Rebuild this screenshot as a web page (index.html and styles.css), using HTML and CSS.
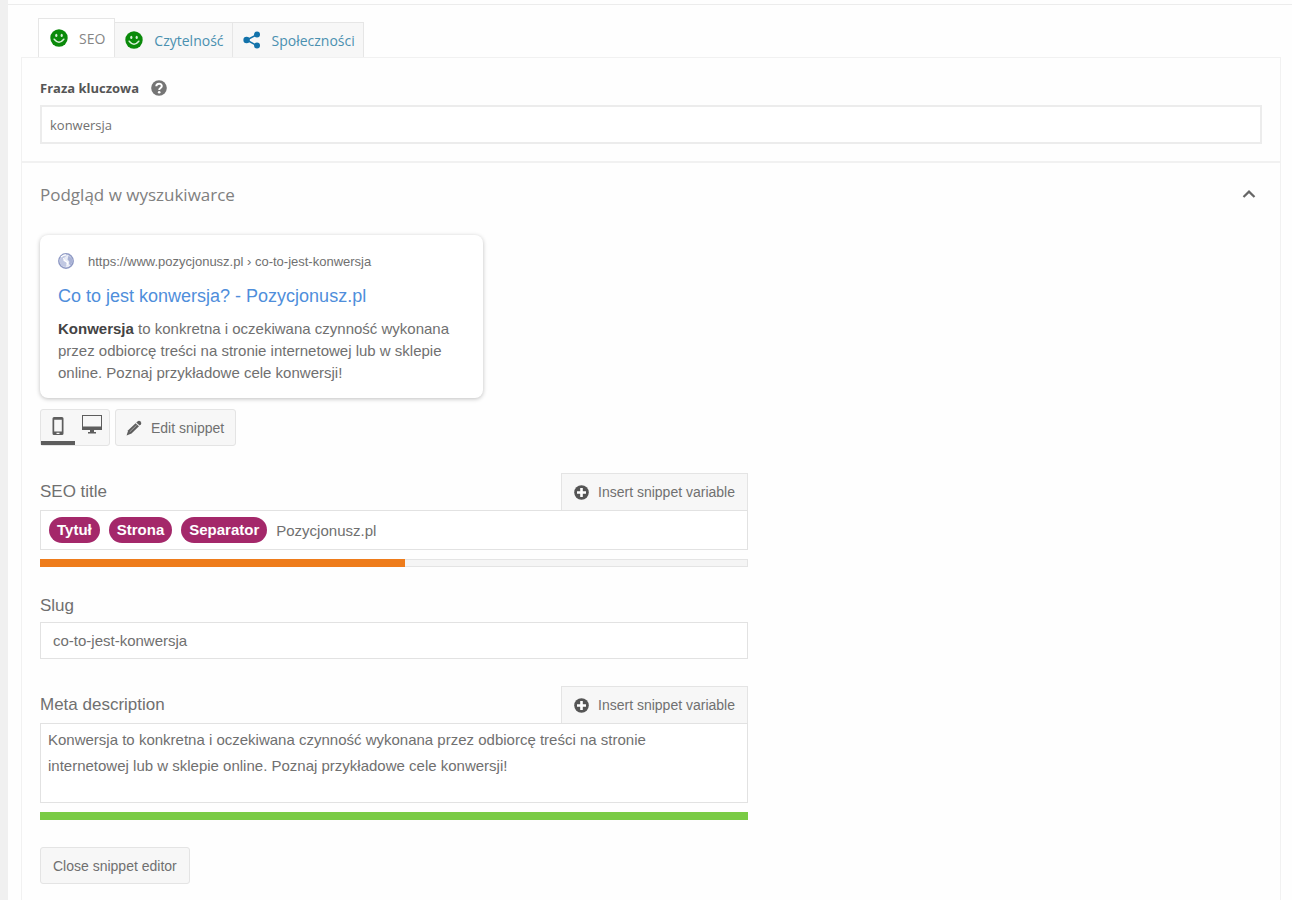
FILE: index.html
```
<!DOCTYPE html>
<html lang="pl">

<head>
    <meta charset="UTF-8">
    <meta name="viewport" content="width=device-width, initial-scale=1">
    <title>SEO</title>
    <link rel="stylesheet" href="styles.css">
</head>

<body>
    <svg class="sprite" aria-hidden="true">
        <symbol id="smile" viewBox="0 0 18 18">
            <circle cx="9" cy="9" r="8.7" fill="#0a8a0a" />
            <ellipse cx="6.3" cy="6.4" rx="1.1" ry="1.6" fill="#d9f0d9" />
            <ellipse cx="11.7" cy="6.4" rx="1.1" ry="1.6" fill="#d9f0d9" />
            <path d="M4.2 10.2Q9 16.2 13.8 10.200" fill="none" stroke="#d9f0d9" stroke-width="1.5" stroke-linecap="round" />
        </symbol>
        <symbol id="plus" viewBox="0 0 15 15">
            <circle cx="7.5" cy="7.5" r="7.3" fill="#555" />
            <path d="M6.2 3h2.600v3.200H12v2.600H8.800V12H6.200V8.800H3V6.200h3.200z" fill="#fff" />
        </symbol>
    </svg>

    <main class="metabox">
        <nav class="tabs">
            <a class="tab active" href="#seo"><svg width="18" height="18"><use href="#smile" /></svg>SEO</a>
            <a class="tab" href="#readability"><svg width="18" height="18"><use href="#smile" /></svg>Czytelność</a>
            <a class="tab" href="#social">
                <svg width="18" height="18" viewBox="0 0 18 18" fill="#1272aa">
                    <path d="M14 3.600L3.600 9L14 14.600" fill="none" stroke="#1272aa" stroke-width="1.5" />
                    <circle cx="3.6" cy="9" r="3.2" />
                    <circle cx="14" cy="3.6" r="3" />
                    <circle cx="14" cy="14.6" r="3" />
                </svg>Społeczności</a>
        </nav>

        <div class="panel" id="seo">
            <section class="keyword">
                <div class="keyword-label">
                    <label for="keyword">Fraza kluczowa</label>
                    <button class="icon-btn" type="button" aria-label="Pomoc">
                        <svg width="16" height="16" viewBox="0 0 16 16">
                            <circle cx="8" cy="8" r="7.8" fill="#757575" />
                            <path d="M5.3 6.2C5.3 2.9 10.8 2.9 10.8 6.1C10.8 8 8.2 7.9 8.2 9.9" fill="none" stroke="#fff" stroke-width="2" />
                            <circle cx="8.2" cy="12.2" r="1.3" fill="#fff" />
                        </svg>
                    </button>
                </div>
                <input id="keyword" type="text" value="konwersja">
            </section>

            <section class="preview">
                <div class="preview-head">
                    <h2>Podgląd w wyszukiwarce</h2>
                    <button class="icon-btn" type="button" aria-label="Zwiń">
                        <svg width="14" height="10" viewBox="0 0 14 10">
                            <path d="M1.500 8L7 2.600L12.500 8" fill="none" stroke="#666" stroke-width="2.2" />
                        </svg>
                    </button>
                </div>

                <div class="card">
                    <div class="card-url">
                        <svg width="16" height="16" viewBox="0 0 16 16">
                            <circle cx="8" cy="8" r="7.2" fill="#e9ecf6" stroke="#8e99c4" stroke-width="1.5" />
                            <path d="M2.500 4.500Q4.500 1.500 8 1.600L8.500 3L6.300 4.600L6.600 6.400L5 7.500L8 9L9 11L7.500 14Q2 13.500 1.500 8z" fill="#c1c8e2" />
                            <path d="M3 4Q5 2 8 1.800M5.500 5L6.500 7.500L9.500 9.500L9 12" fill="none" stroke="#fff" stroke-width="1.2" />
                            <path d="M10.500 2.500L14 5.500L14.600 9L12.500 12.500L11 11L11.300 8.500L9.500 6.500z" fill="#a9b2d5" />
                        </svg>
                        <span>https://www.pozycjonusz.pl › co-to-jest-konwersja</span>
                    </div>
                    <a class="card-title" href="#">Co to jest konwersja? - Pozycjonusz.pl</a>
                    <p><strong>Konwersja</strong> to konkretna i oczekiwana czynność wykonana przez odbiorcę treści na stronie internetowej lub w sklepie online. Poznaj przykładowe cele konwersji!</p>
                </div>

                <div class="toolbar">
                    <div class="modes">
                        <button class="mode active" type="button" aria-label="Mobile preview">
                            <svg width="12" height="18" viewBox="0 0 12 18">
                                <path fill-rule="evenodd" d="M2 0h8a1.500 1.500 0 0 1 1.500 1.500v15A1.500 1.500 0 0 1 10 18H2a1.500 1.500 0 0 1-1.500-1.500v-15A1.500 1.500 0 0 1 2 0zM2.200 2.800v11.700h7.600V2.800zM4.500 15.700h3v1.200h-3z" fill="#5d5d5d" />
                            </svg>
                        </button>
                        <button class="mode" type="button" aria-label="Desktop preview">
                            <svg width="20" height="22" viewBox="0 0 20 22">
                                <path fill-rule="evenodd" d="M0 0h20v15H0zM1 1v10.500h18V1z" fill="#5d5d5d" />
                                <path d="M8 15h4v2h2v1.500H6V17h2z" fill="#5d5d5d" />
                            </svg>
                        </button>
                    </div>
                    <button class="btn" type="button">
                        <svg width="16" height="16" viewBox="0 0 16 16" fill="#5d5d5d">
                            <path d="M11.500 1.500Q13 .2 14.500 1.500Q16 3 14.900 4.300L13.600 5.600L10.300 2.600z" />
                            <path d="M9.600 3.200L13 6.300L5.500 13.600L.6 15.500L2.200 10.300z" />
                            <path d="M3.800 11.800L10.600 5.200" stroke="#bbb" stroke-width=".8" />
                        </svg>
                        Edit snippet
                    </button>
                </div>

                <form class="editor">
                    <div class="field">
                        <div class="field-head">
                            <label for="seo-title">SEO title</label>
                            <button class="btn" type="button"><svg width="15" height="15"><use href="#plus" /></svg>Insert snippet variable</button>
                        </div>
                        <div class="title-box">
                            <span class="pill">Tytuł</span>
                            <span class="pill">Strona</span>
                            <span class="pill">Separator</span>
                            <input id="seo-title" type="text" value="Pozycjonusz.pl">
                        </div>
                        <div class="bar">
                            <div class="bar-fill ok" style="width: 51.5%"></div>
                        </div>
                    </div>

                    <div class="field">
                        <label for="slug">Slug</label>
                        <input id="slug" type="text" value="co-to-jest-konwersja">
                    </div>

                    <div class="field">
                        <div class="field-head">
                            <label for="description">Meta description</label>
                            <button class="btn" type="button"><svg width="15" height="15"><use href="#plus" /></svg>Insert snippet variable</button>
                        </div>
                        <textarea id="description">Konwersja to konkretna i oczekiwana czynność wykonana przez odbiorcę treści na stronie internetowej lub w sklepie online. Poznaj przykładowe cele konwersji!</textarea>
                        <div class="bar">
                            <div class="bar-fill good" style="width: 100%"></div>
                        </div>
                    </div>

                    <button class="btn" type="button">Close snippet editor</button>
                </form>
            </section>
        </div>
    </main>
</body>

</html>
```
FILE: styles.css
```
* {
    box-sizing: border-box;
}

body {
    margin: 0;
    padding: 4px 0 0 8px;
    background: linear-gradient(to right, #f0f0f0 8px, #fefefe 8px);
    font-family: "Liberation Sans", Arial, sans-serif;
    font-size: 14px;
    color: #707070;
}

.sprite {
    display: none;
}

svg {
    display: block;
    flex: none;
}

button,
input,
textarea {
    font: inherit;
    color: inherit;
}

.metabox {
    min-height: calc(100vh - 4px);
    display: flex;
    flex-direction: column;
    border-top: 1px solid #ececec;
    padding: 13px 11px 0 13px;
}

.tabs {
    display: flex;
    align-items: flex-end;
    padding-left: 17px;
    font-family: "Open Sans", sans-serif;
}

.tab {
    display: flex;
    align-items: center;
    gap: 11px;
    height: 35px;
    padding: 0 8px 0 10px;
    border: 1px solid #e6e6e6;
    border-width: 1px 1px 0 0;
    background: #f7f7f7;
    color: #4a90b0;
    text-decoration: none;
}

.tab.active {
    height: 39px;
    padding: 0 9px 0 11px;
    border-left-width: 1px;
    background: #fff;
    color: #858585;
}

.panel {
    flex: 1;
    border: 1px solid #f1f1f1;
    border-bottom: 0;
}

.keyword {
    padding: 20px 18px 17px;
    border-bottom: 2px solid #f1f1f1;
    font-family: "Open Sans", sans-serif;
}

.keyword-label {
    display: flex;
    align-items: center;
    gap: 12px;
    height: 20px;
    margin-bottom: 7px;
    font-size: 13px;
    font-weight: bold;
    color: #555;
}

.icon-btn {
    padding: 0;
    border: 0;
    background: none;
}

input,
textarea {
    display: block;
    width: 100%;
    border: 1px solid #e2e2e2;
    background: #fff;
    border-radius: 0;
}

#keyword {
    height: 39px;
    border-width: 2px;
    border-color: #ececec;
    padding: 0 8px;
    font-size: 13px;
}

.preview {
    padding: 18px 18px 16px;
}

.preview-head {
    display: flex;
    justify-content: space-between;
    align-items: center;
    height: 26px;
    padding-right: 6px;
}

.preview-head h2 {
    margin: 0;
    font-family: "Open Sans", sans-serif;
    font-size: 17px;
    font-weight: normal;
    color: #808080;
}

.card {
    max-width: 443px;
    margin-top: 28px;
    padding: 17px 18px 14px;
    border-radius: 8px;
    background: #fff;
    box-shadow: 0 1px 4px rgba(0, 0, 0, .25);
}

.card-url {
    display: flex;
    align-items: center;
    gap: 14px;
    height: 18px;
    font-size: 13px;
}

.card-title {
    display: block;
    margin: 14px 0 10px;
    font-size: 18px;
    line-height: 24px;
    color: #4f8edb;
    text-decoration: none;
}

.card p {
    margin: 0;
    font-size: 15px;
    line-height: 22px;
}

.card strong {
    color: #444;
}

.toolbar {
    display: flex;
    gap: 5px;
    margin-top: 11px;
}

.modes {
    display: flex;
    height: 37px;
    border: 1px solid #e4e4e4;
    border-radius: 3px;
    background: #f7f7f7;
}

.mode {
    display: flex;
    justify-content: center;
    align-items: center;
    width: 34px;
    padding: 0;
    border: 0;
    border-bottom: 4px solid transparent;
    background: none;
}

.mode.active {
    border-bottom-color: #5d5d5d;
}

.btn {
    display: flex;
    align-items: center;
    gap: 9px;
    height: 37px;
    padding: 0 12px;
    border: 1px solid #e4e4e4;
    border-radius: 3px;
    background: #f7f7f7;
}

.toolbar .btn {
    padding: 0 11px 0 10px;
}

.editor {
    max-width: 708px;
    margin-top: 27px;
}

.field {
    margin-bottom: 27px;
}

.field label {
    display: block;
    font-size: 17px;
    line-height: 24px;
}

.field-head {
    display: flex;
    justify-content: space-between;
    align-items: center;
}

.field-head .btn {
    border-bottom: 0;
    border-radius: 0;
}

.title-box {
    display: flex;
    align-items: center;
    gap: 9px;
    height: 40px;
    padding: 0 8px;
    border: 1px solid #e2e2e2;
    background: #fff;
}

.title-box input {
    flex: 1;
    min-width: 0;
    padding: 0;
    border: 0;
    font-size: 15px;
}

.pill {
    padding: 0 8px;
    border-radius: 13px;
    background: #a4286a;
    color: #fff;
    font-size: 15px;
    font-weight: bold;
    line-height: 26px;
}

#slug {
    height: 37px;
    margin-top: 4px;
    padding: 0 12px;
    font-size: 15px;
}

textarea {
    height: 80px;
    padding: 3px 24px 3px 7px;
    font-size: 15px;
    line-height: 26px;
    resize: none;
}

.bar {
    height: 8px;
    margin-top: 9px;
    background: #f5f5f5;
    box-shadow: inset 0 0 0 1px #e4e4e4;
}

.bar-fill {
    height: 100%;
}

.bar-fill.ok {
    background: #ee7c1b;
}

.bar-fill.good {
    background: #7acb45;
}
```
